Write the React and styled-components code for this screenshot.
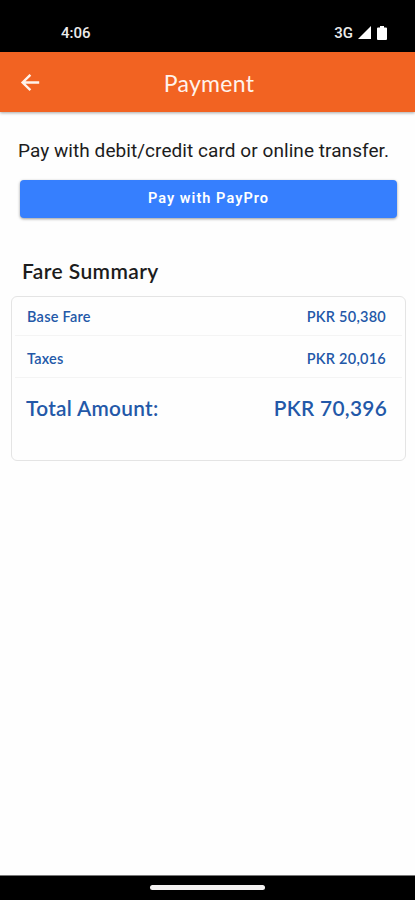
import React from "react";
import styled, { createGlobalStyle } from "styled-components";

const GlobalStyle = createGlobalStyle`
  * { box-sizing: border-box; }
  body { margin: 0; background: #fff; }
`;

const Screen = styled.div`
  width: 415px;
  height: 900px;
  display: flex;
  flex-direction: column;
  background: #fefefe;
  font-family: Lato, sans-serif;
  overflow: hidden;
`;

const StatusBar = styled.div`
  height: 52px;
  flex: none;
  display: flex;
  justify-content: space-between;
  align-items: center;
  padding: 13px 28px 0 61px;
  background: #000;
  color: #ececec;
  font: 500 15px/20px Roboto, sans-serif;
`;

const StatusIcons = styled.div`
  display: flex;
  align-items: center;

  svg { display: block; margin-left: 5px; }
  svg + svg { margin-left: 6px; }
`;

const Header = styled.header`
  height: 60px;
  flex: none;
  display: grid;
  grid-template-columns: 60px 1fr 57px;
  align-items: center;
  padding-top: 2px;
  background: #f26322;
  box-shadow: 0 1px 3px rgba(0, 0, 0, 0.35);
  color: #fff3ec;
`;

const BackButton = styled.button`
  border: 0;
  padding: 0;
  background: none;
  color: inherit;
  display: flex;
  justify-content: center;
`;

const Title = styled.h1`
  margin: 0;
  text-align: center;
  font-size: 23px;
  line-height: 28px;
  font-weight: 400;
  letter-spacing: 0.3px;
  white-space: nowrap;
`;

const Content = styled.main`
  flex: 1;
  display: flex;
  flex-direction: column;
  padding: 27px 9px 0 11px;
`;

const Prompt = styled.p`
  margin: 0 0 17px 7px;
  color: #1c1c1c;
  font: 400 19px/24px Roboto, sans-serif;
  letter-spacing: 0.06px;
  white-space: nowrap;
`;

const PayButton = styled.button`
  height: 38px;
  margin: 0 9px;
  border: 0;
  border-radius: 4px;
  padding: 0 0 1px;
  background: #367ffe;
  box-shadow: 0 1px 3px rgba(0, 0, 0, 0.4);
  color: #fff;
  font: 600 14.5px/20px Roboto, sans-serif;
  letter-spacing: 1.05px;
`;

const SectionTitle = styled.h2`
  margin: 41px 0 13px 11px;
  color: #1c1c1c;
  font-size: 21px;
  line-height: 24px;
  font-weight: 600;
  letter-spacing: 0.4px;
`;

const Card = styled.section`
  height: 165px;
  border: 1.5px solid #e4e4e4;
  border-radius: 6px;
  padding: 0 3px;
`;

const FareRow = styled.div`
  height: ${(p) => (p.$total ? "59px" : "42px")};
  display: flex;
  justify-content: space-between;
  align-items: center;
  padding: ${(p) => (p.$total ? "0 15px 0 11px" : "4px 16px 0 12px")};
  border-bottom: ${(p) => (p.$total ? "0" : "1px solid #f4f4f4")};
  color: #2358a8;
  font-size: ${(p) => (p.$total ? "20.8px" : "14.5px")};
  font-weight: 600;
  letter-spacing: ${(p) => (p.$total ? "0.3px" : "0.25px")};

  &:first-child { height: 39px; padding-top: 1px; }
`;

const NavBar = styled.footer`
  height: 25px;
  flex: none;
  display: flex;
  justify-content: center;
  align-items: center;
  border-top: 1px solid #777;
  padding-bottom: 1px;
  background: #000;
`;

const HomeHandle = styled.div`
  width: 115px;
  height: 5px;
  border-radius: 3px;
  background: #f4f2f2;
`;

const fares = [
  { label: "Base Fare", amount: "PKR 50,380" },
  { label: "Taxes", amount: "PKR 20,016" },
  { label: "Total Amount:", amount: "PKR 70,396", total: true },
];

export default function App() {
  return (
    <Screen>
      <GlobalStyle />
      <StatusBar>
        <span>4:06</span>
        <StatusIcons>
          <span>3G</span>
          <svg width="13" height="13" viewBox="0 0 13 13">
            <path d="M13 0V13H0Z" fill="#fff" />
          </svg>
          <svg width="10" height="14" viewBox="0 0 10 14">
            <path d="M3 0H7V1.5H9Q10 1.5 10 2.5V13Q10 14 9 14H1Q0 14 0 13V2.5Q0 1.5 1 1.5H3Z" fill="#fff" />
          </svg>
        </StatusIcons>
      </StatusBar>
      <Header>
        <BackButton aria-label="Back">
          <svg width="20" height="18" viewBox="0 0 20 18" fill="none" stroke="currentColor" strokeWidth="2.4">
            <path d="M19.2 8.5H2.5M10.4 0.8L2.6 8.5L10.4 16.2" />
          </svg>
        </BackButton>
        <Title>Payment</Title>
      </Header>
      <Content>
        <Prompt>Pay with debit/credit card or online transfer.</Prompt>
        <PayButton>Pay with PayPro</PayButton>
        <SectionTitle>Fare Summary</SectionTitle>
        <Card>
          {fares.map((fare) => (
            <FareRow key={fare.label} $total={fare.total}>
              <span>{fare.label}</span>
              <span>{fare.amount}</span>
            </FareRow>
          ))}
        </Card>
      </Content>
      <NavBar>
        <HomeHandle />
      </NavBar>
    </Screen>
  );
}
